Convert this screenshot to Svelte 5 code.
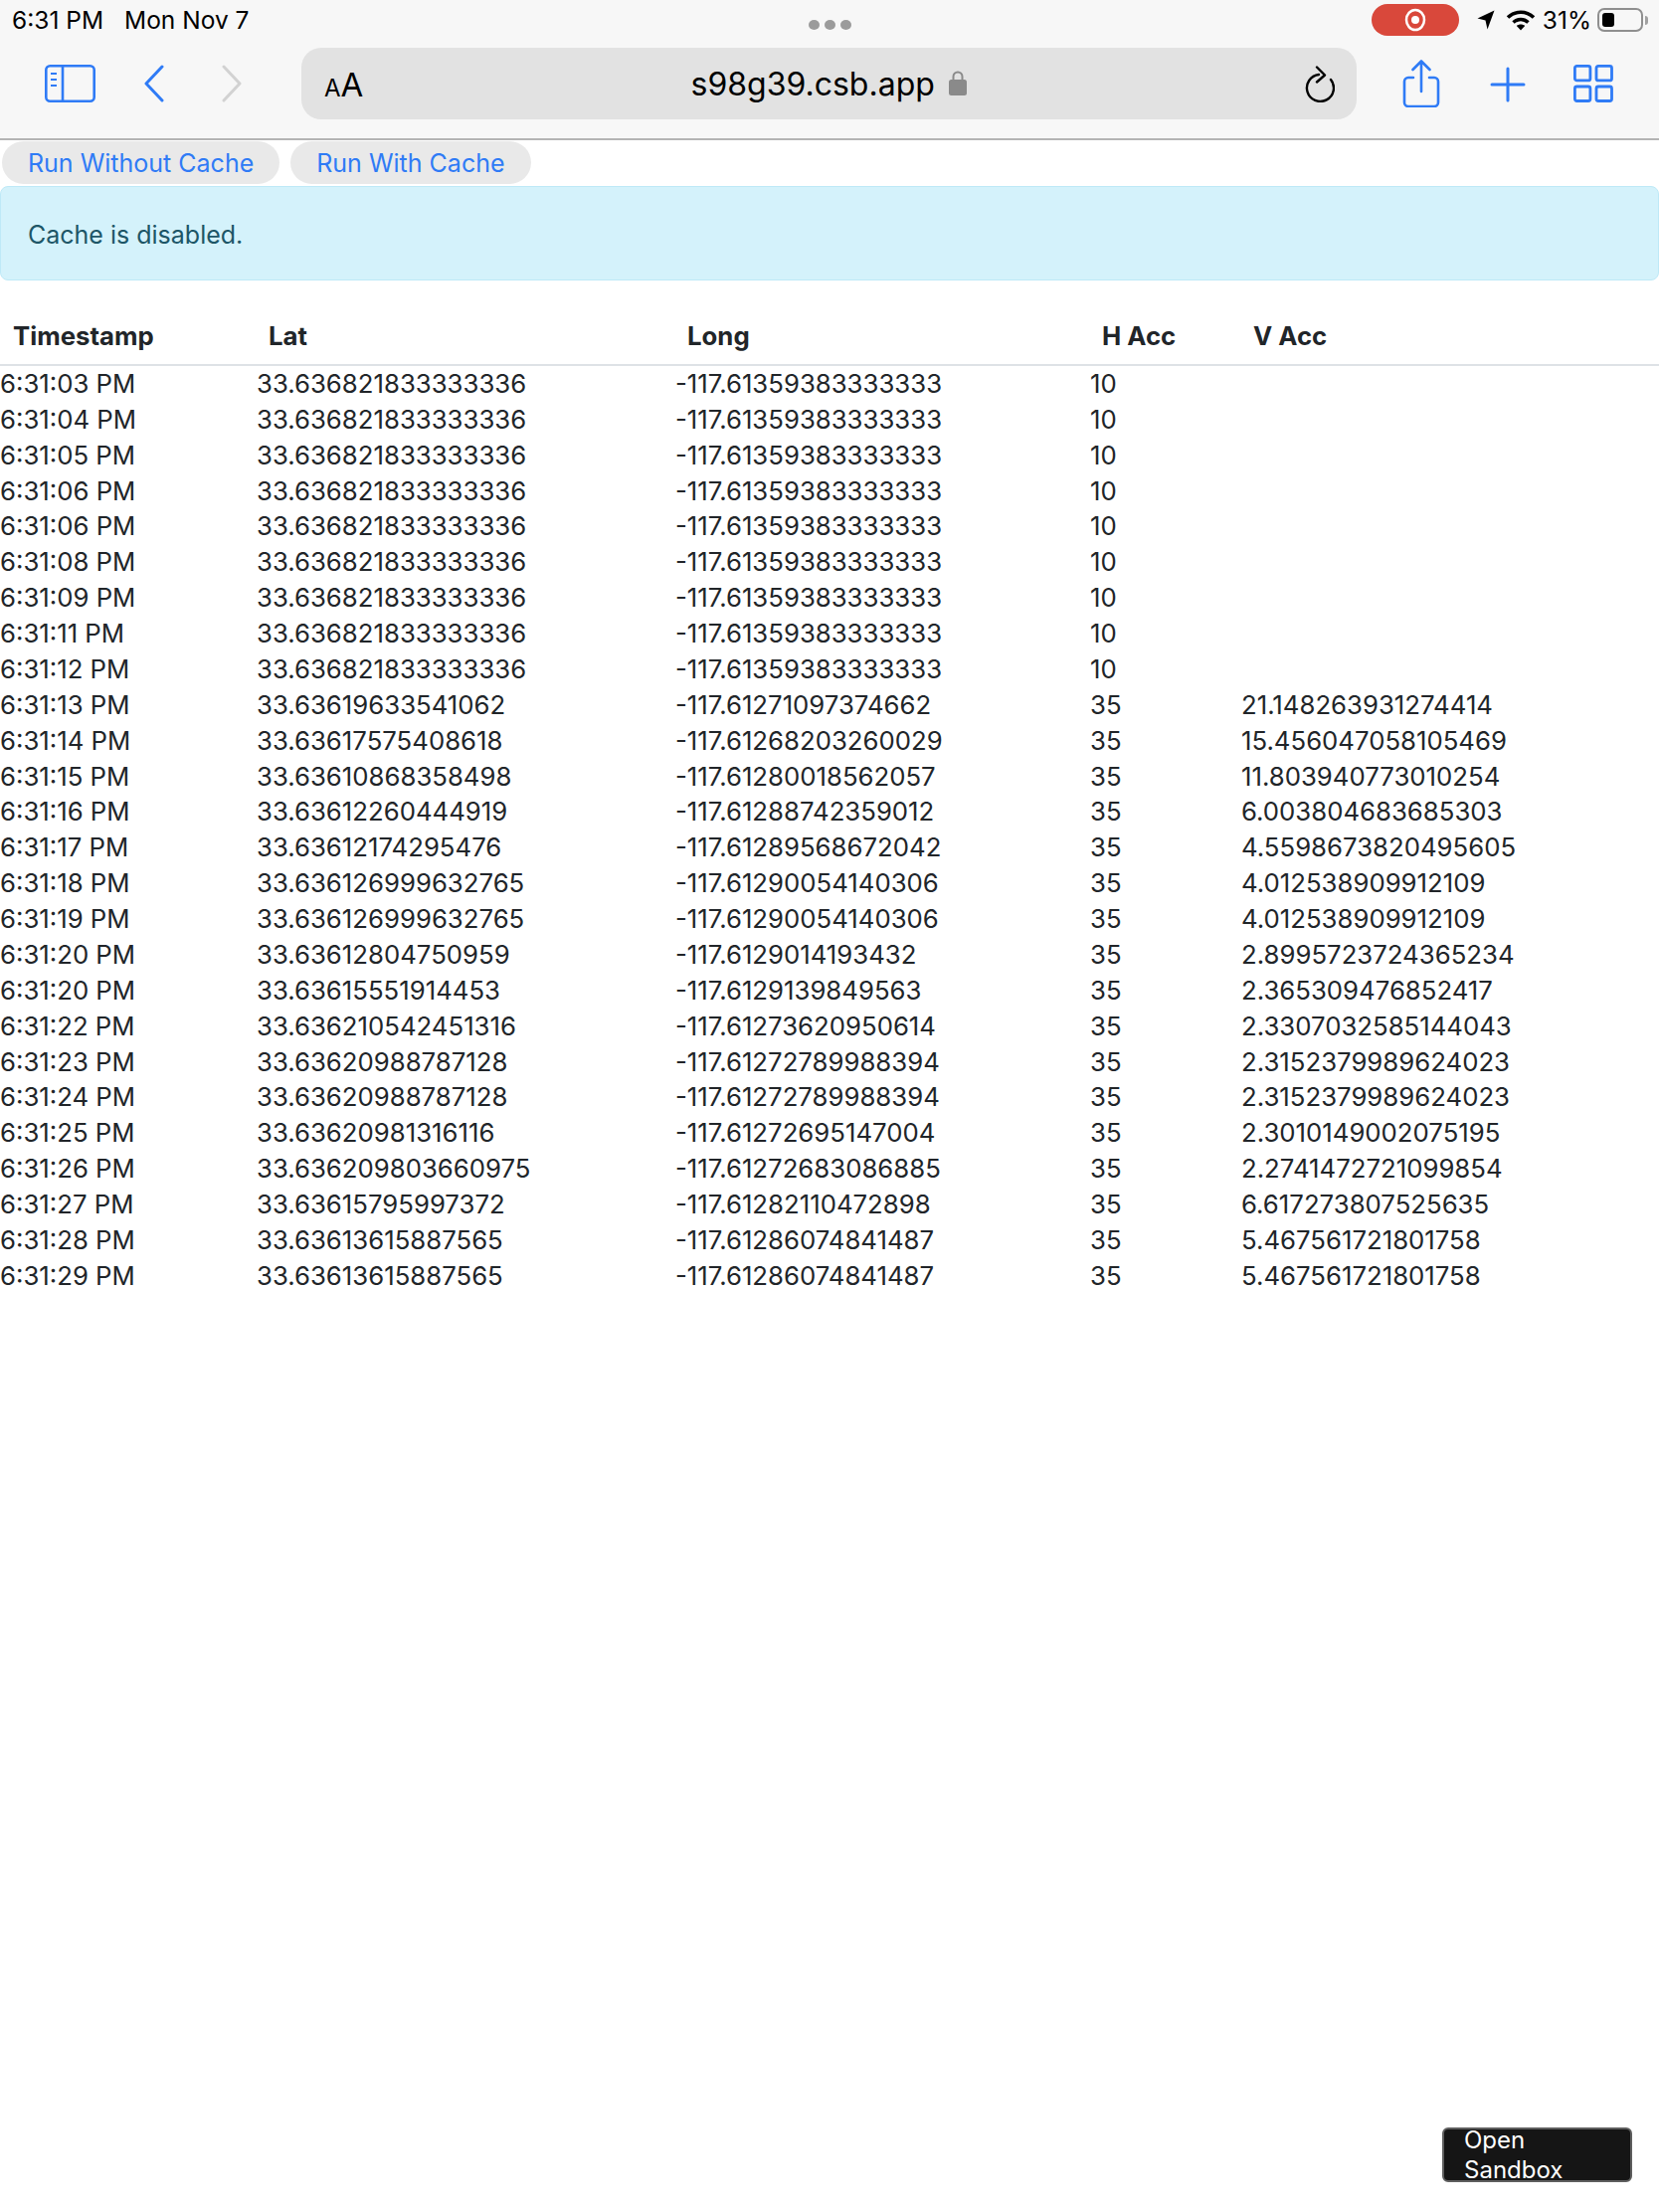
<script>
  const rows = [
    ['6:31:03 PM', '33.636821833333336', '-117.61359383333333', '10', ''],
    ['6:31:04 PM', '33.636821833333336', '-117.61359383333333', '10', ''],
    ['6:31:05 PM', '33.636821833333336', '-117.61359383333333', '10', ''],
    ['6:31:06 PM', '33.636821833333336', '-117.61359383333333', '10', ''],
    ['6:31:06 PM', '33.636821833333336', '-117.61359383333333', '10', ''],
    ['6:31:08 PM', '33.636821833333336', '-117.61359383333333', '10', ''],
    ['6:31:09 PM', '33.636821833333336', '-117.61359383333333', '10', ''],
    ['6:31:11 PM', '33.636821833333336', '-117.61359383333333', '10', ''],
    ['6:31:12 PM', '33.636821833333336', '-117.61359383333333', '10', ''],
    ['6:31:13 PM', '33.63619633541062', '-117.61271097374662', '35', '21.148263931274414'],
    ['6:31:14 PM', '33.63617575408618', '-117.61268203260029', '35', '15.456047058105469'],
    ['6:31:15 PM', '33.63610868358498', '-117.61280018562057', '35', '11.803940773010254'],
    ['6:31:16 PM', '33.63612260444919', '-117.61288742359012', '35', '6.003804683685303'],
    ['6:31:17 PM', '33.63612174295476', '-117.61289568672042', '35', '4.5598673820495605'],
    ['6:31:18 PM', '33.636126999632765', '-117.61290054140306', '35', '4.012538909912109'],
    ['6:31:19 PM', '33.636126999632765', '-117.61290054140306', '35', '4.012538909912109'],
    ['6:31:20 PM', '33.63612804750959', '-117.6129014193432', '35', '2.8995723724365234'],
    ['6:31:20 PM', '33.63615551914453', '-117.6129139849563', '35', '2.365309476852417'],
    ['6:31:22 PM', '33.636210542451316', '-117.61273620950614', '35', '2.3307032585144043'],
    ['6:31:23 PM', '33.63620988787128', '-117.61272789988394', '35', '2.3152379989624023'],
    ['6:31:24 PM', '33.63620988787128', '-117.61272789988394', '35', '2.3152379989624023'],
    ['6:31:25 PM', '33.63620981316116', '-117.61272695147004', '35', '2.3010149002075195'],
    ['6:31:26 PM', '33.636209803660975', '-117.61272683086885', '35', '2.2741472721099854'],
    ['6:31:27 PM', '33.63615795997372', '-117.61282110472898', '35', '6.617273807525635'],
    ['6:31:28 PM', '33.63613615887565', '-117.61286074841487', '35', '5.467561721801758'],
    ['6:31:29 PM', '33.63613615887565', '-117.61286074841487', '35', '5.467561721801758']
  ];
</script>

<div class="page">
  <header class="chrome">
    <div class="status">
      <div class="status-left">
        <span>6:31 PM</span>
        <span>Mon Nov 7</span>
      </div>
      <div class="dots"><i></i><i></i><i></i></div>
      <div class="status-right">
        <span class="rec">
          <svg width="24" height="24" viewBox="0 0 24 24" fill="none">
            <ellipse cx="12" cy="12" rx="9" ry="10" stroke="#fff" stroke-width="2.5"/>
            <circle cx="12" cy="12" r="4" fill="#fff"/>
          </svg>
        </span>
        <svg class="loc" width="18" height="20" viewBox="0 0 18 20">
          <path d="M17.5 .5 L10.5 19.5 L8.5 10.5 L.5 8.5 Z" fill="#000"/>
        </svg>
        <svg class="wifi" width="30" height="22" viewBox="0 0 30 22" fill="none" stroke="#000" stroke-width="3.6">
          <path d="M2 8.5 C9.5 1.5 20.5 1.5 28 8.5"/>
          <path d="M7.5 13.5 C12 9.5 18 9.5 22.5 13.5"/>
          <path d="M15 21.5 L10.8 17 C13 15 17 15 19.2 17 Z" fill="#000" stroke="none"/>
        </svg>
        <span class="pct">31%</span>
        <span class="battery"><b></b></span>
        <span class="nub"></span>
      </div>
    </div>
    <div class="toolbar">
      <div class="nav">
        <svg width="51" height="38" viewBox="0 0 51 38" fill="none" stroke="#2f7bf6" stroke-width="2.6">
          <rect x="1.3" y="1.3" width="48.4" height="35.4" rx="4"/>
          <path d="M18 1v36"/>
          <path d="M6 9h6M6 15h6M6 21h6" stroke-width="2.2"/>
        </svg>
        <svg class="back" width="20" height="38" viewBox="0 0 20 38" fill="none" stroke="#2f7bf6" stroke-width="3" stroke-linecap="round" stroke-linejoin="round">
          <path d="M18 2 L2 19 L18 36"/>
        </svg>
        <svg class="forward" width="20" height="38" viewBox="0 0 20 38" fill="none" stroke="#d2d2d2" stroke-width="3" stroke-linecap="round" stroke-linejoin="round">
          <path d="M2 2 L18 19 L2 36"/>
        </svg>
      </div>
      <div class="urlbar">
        <span class="aa"><small>A</small>A</span>
        <span class="url">
          s98g39.csb.app
          <svg width="18" height="26" viewBox="0 0 18 26" fill="none">
            <path d="M4.5 12V7a4.5 4.5 0 0 1 9 0v5" stroke="#8a8a8a" stroke-width="2"/>
            <rect y="10" width="18" height="16" rx="2.5" fill="#8a8a8a"/>
          </svg>
        </span>
        <svg class="reload" width="31" height="37" viewBox="0 0 31 37" fill="none" stroke="#000" stroke-width="2.4" stroke-linecap="round" stroke-linejoin="round">
          <path d="M15 9 A13.5 13.5 0 1 0 27 14"/>
          <path d="M13 1.5 L21 9.5 L13 16.5"/>
        </svg>
      </div>
      <div class="actions">
        <svg width="38" height="48" viewBox="0 0 38 48" fill="none" stroke="#2f7bf6" stroke-width="2.6" stroke-linecap="round" stroke-linejoin="round">
          <path d="M11 18H6a4 4 0 0 0-4 4v21a4 4 0 0 0 4 4h26a4 4 0 0 0 4-4V22a4 4 0 0 0-4-4h-5"/>
          <path d="M19 32V2M10.5 10 L19 1.5 L27.5 10"/>
        </svg>
        <svg class="plus" width="36" height="36" viewBox="0 0 36 36" fill="none" stroke="#2f7bf6" stroke-width="3" stroke-linecap="round">
          <path d="M18 2v32M2 18h32"/>
        </svg>
        <svg class="tabs" width="40" height="38" viewBox="0 0 40 38" fill="none" stroke="#2f7bf6" stroke-width="2.8">
          <rect x="1.4" y="1.4" width="15.5" height="14.5" rx="2"/>
          <rect x="23" y="1.4" width="15.5" height="14.5" rx="2"/>
          <rect x="1.4" y="22" width="15.5" height="14.5" rx="2"/>
          <rect x="23" y="22" width="15.5" height="14.5" rx="2"/>
        </svg>
      </div>
    </div>
  </header>

  <div class="buttons">
    <button>Run Without Cache</button>
    <button>Run With Cache</button>
  </div>
  <div class="alert">Cache is disabled.</div>

  <table>
    <thead>
      <tr>
        <th class="c1">Timestamp</th>
        <th class="c2">Lat</th>
        <th class="c3">Long</th>
        <th class="c4">H Acc</th>
        <th>V Acc</th>
      </tr>
    </thead>
    <tbody>
      {#each rows as row}
        <tr>
          {#each row as cell}
            <td>{cell}</td>
          {/each}
        </tr>
      {/each}
    </tbody>
  </table>

  <div class="sandbox"><span>Open Sandbox</span></div>
</div>

<style>
  :global(body) {
    margin: 0;
    background: #fff;
  }
  .page {
    position: relative;
    height: 2224px;
    font-family: Inter, "Liberation Sans", sans-serif;
    color: #212529;
    overflow: hidden;
  }

  /* Safari chrome */
  .chrome {
    height: 139px;
    background: #f7f7f7;
    border-bottom: 2px solid #b4b4b4;
  }
  .status {
    height: 48px;
    display: grid;
    grid-template-columns: 1fr auto 1fr;
    align-items: flex-start;
    color: #000;
    font-size: 24.5px;
  }
  .status-left {
    display: flex;
    gap: 21px;
    padding: 5px 0 0 12px;
  }
  .dots {
    display: flex;
    gap: 5px;
    padding-top: 20px;
  }
  .dots i {
    width: 11px;
    height: 10px;
    border-radius: 50%;
    background: #9b9b9b;
  }
  .status-right {
    display: flex;
    align-items: center;
    justify-content: flex-end;
    padding: 4px 11px 0 0;
  }
  .rec {
    width: 88px;
    height: 32px;
    border-radius: 16px;
    background: #d9483b;
    display: flex;
    align-items: center;
    justify-content: center;
    margin-right: 18px;
  }
  .loc {
    margin-right: 11px;
  }
  .wifi {
    margin-right: 7px;
  }
  .pct {
    margin-right: 6px;
  }
  .battery {
    width: 46px;
    height: 24px;
    box-sizing: border-box;
    border: 2px solid #8f8f8f;
    border-radius: 7px;
    padding: 3px;
    display: flex;
  }
  .battery b {
    width: 12px;
    background: #000;
    border-radius: 3px;
  }
  .nub {
    width: 3px;
    height: 9px;
    margin-left: 2px;
    background: #a0a0a0;
    border-radius: 0 3px 3px 0;
  }
  .toolbar {
    display: flex;
    align-items: flex-start;
  }
  .nav {
    display: flex;
    align-items: center;
    width: 258px;
    padding: 17px 0 0 45px;
  }
  .back {
    margin-left: 49px;
  }
  .forward {
    margin-left: 58px;
  }
  .urlbar {
    width: 1061px;
    height: 72px;
    background: #e2e2e2;
    border-radius: 20px;
    display: flex;
    align-items: center;
    padding: 0 22px 0 23px;
    box-sizing: border-box;
    color: #000;
    justify-content: space-between;
  }
  .aa {
    font-size: 33px;
    line-height: 1;
    margin-top: 3px;
  }
  .aa small {
    font-size: 24px;
  }
  .url {
    font-size: 32px;
    display: flex;
    align-items: center;
    gap: 14px;
    margin-left: -10px;
  }
  .url svg {
    margin-top: -2px;
  }
  .actions {
    display: flex;
    align-items: flex-start;
    padding: 12px 0 0 46px;
  }
  .plus {
    margin: 7px 0 0 50px;
  }
  .tabs {
    margin: 5px 0 0 48px;
  }

  /* Page content */
  .buttons {
    display: flex;
    gap: 11px;
    padding: 1px 0 2px 2px;
  }
  .buttons button {
    height: 43px;
    padding: 2px 26px 0;
    border: none;
    border-radius: 22px;
    background: #e9e9e9;
    color: #2f7bf6;
    font-family: inherit;
    font-size: 25px;
    line-height: 1;
  }
  .alert {
    height: 95px;
    box-sizing: border-box;
    padding: 2px 27px 0;
    display: flex;
    align-items: center;
    background: #d4f2fb;
    border: 1px solid #bee9f7;
    border-radius: 8px;
    color: #1d5667;
    font-size: 25px;
  }
  table {
    border-collapse: collapse;
    table-layout: fixed;
    width: 100%;
    margin-top: 31px;
    font-size: 25.75px;
    color: #212529;
  }
  th {
    height: 54px;
    padding: 0 0 5px 12px;
    text-align: left;
    font-weight: 700;
    border-bottom: 2px solid #dee2e6;
    box-sizing: border-box;
  }
  th.c1 { padding-left: 13px; }
  .c1 { width: 258px; }
  .c2 { width: 421px; }
  .c3 { width: 417px; }
  .c4 { width: 152px; }
  td {
    height: 35.88px;
    box-sizing: border-box;
    padding: 1px 0 0;
    white-space: nowrap;
  }
  .sandbox {
    position: absolute;
    left: 1450px;
    top: 2139px;
    width: 191px;
    height: 55px;
    box-sizing: border-box;
    padding: 0 50px 0 20px;
    overflow: hidden;
    background: #151515;
    border: 2px solid #5e5e5e;
    border-radius: 6px;
    color: #fff;
    font-size: 24px;
    line-height: 30px;
  }
  .sandbox span {
    display: block;
    margin-top: -4px;
  }
</style>
